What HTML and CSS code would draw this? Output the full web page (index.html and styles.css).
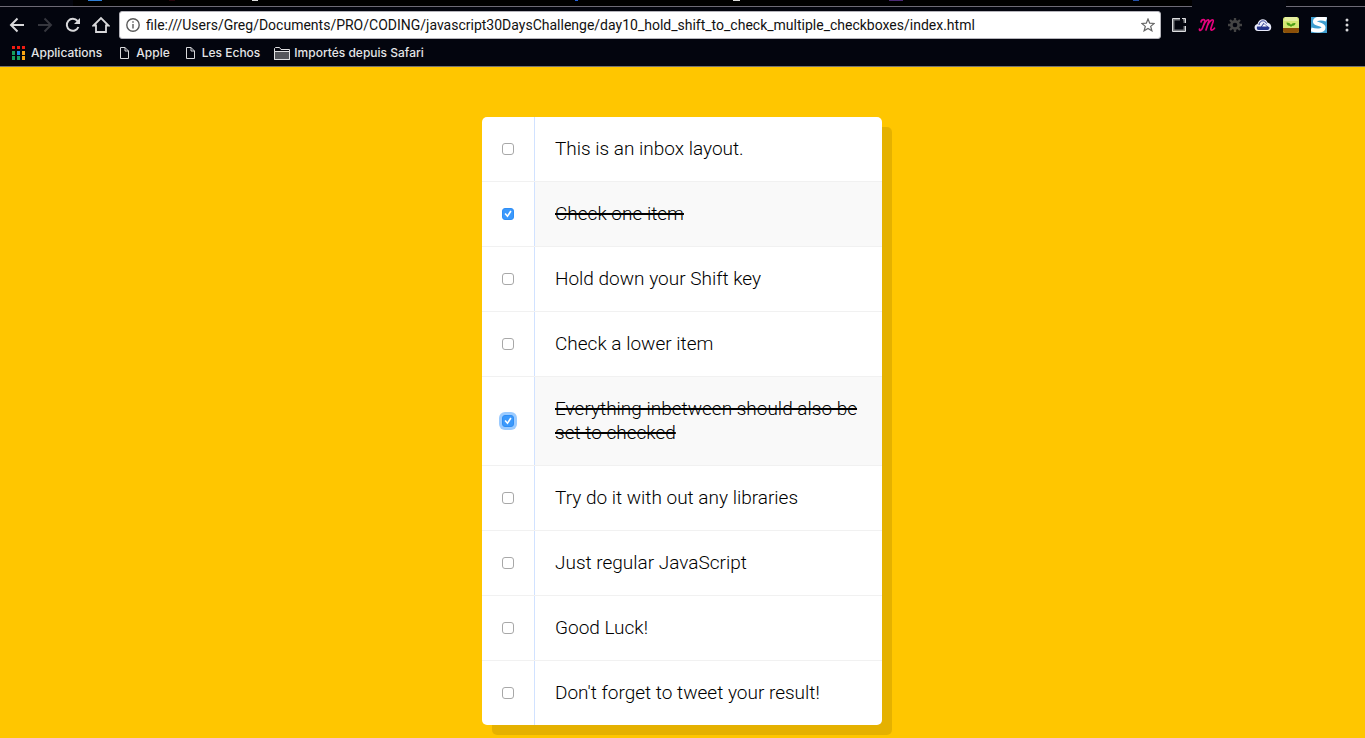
FILE: index.html
```html
<!DOCTYPE html>
<html lang="en">
<head>
<meta charset="utf-8">
<title>Hold Shift to Check Multiple Checkboxes</title>
<link rel="stylesheet" href="styles.css">
</head>
<body>
<header class="browser">
  <div class="tabs" aria-hidden="true">
    <svg class="tabs-left" width="1192" height="7" viewBox="0 0 1192 7">
      <path fill="#000" d="M73 0h1119v6H73z"/>
      <path fill="#2f7fd6" d="M88 0h14v1H88z"/>
      <path fill="#28040c" d="M169 0h6v1h-6z"/>
      <path fill="#ddd" d="M252 0h6v1h-6zM733 0h7v1h-7z"/>
      <path fill="#2563e0" d="M575 0h3v1h-3z"/>
      <path fill="#4b2a75" d="M889 0h14v1h-14z"/>
      <path fill="#2550a8" d="M1133 0h6v1h-6z"/>
      <path fill="#6d6a75" d="M0 6h1192v1H0z"/>
    </svg>
    <div class="tab-rest"></div>
  </div>
  <div class="toolbar">
    <nav class="nav" aria-label="Navigation">
      <button class="icon" aria-label="Back"><svg width="16" height="16" viewBox="0 0 16 16" fill="none" stroke="#d8d8da" stroke-width="2"><path d="M15 8H2.5M8.5 1.500 2 8l6.500 6.500"/></svg></button>
      <button class="icon" aria-label="Forward"><svg width="16" height="16" viewBox="0 0 16 16" fill="none" stroke="#36373e" stroke-width="2"><path d="M1 8h12.500M7.500 1.500 14 8l-6.500 6.500"/></svg></button>
      <button class="icon" aria-label="Reload"><svg width="16" height="16" viewBox="0 0 16 16" fill="none" stroke="#d8d8da" stroke-width="2"><path d="M13.400 10A6 6 0 1 1 12.500 4"/><path d="M15 1v6H9z" fill="#d8d8da" stroke="none"/></svg></button>
      <button class="icon" aria-label="Home"><svg width="18" height="18" viewBox="0 0 18 18" fill="none" stroke="#d8d8da" stroke-width="1.800"><path d="M1.500 9.500 9 2l7.500 7.500H14V16H4V9.500z"/></svg></button>
    </nav>
    <label class="address">
      <svg width="14" height="14" viewBox="0 0 14 14" fill="none" stroke="#5a5a5a" stroke-width="1.400"><circle cx="7" cy="7" r="6.200"/><path d="M7 6v4.500M7 3.300v1.500"/></svg>
      <input class="url" type="text" aria-label="Address" value="file:///Users/Greg/Documents/PRO/CODING/javascript30DaysChallenge/day10_hold_shift_to_check_multiple_checkboxes/index.html">
      <svg width="14" height="14" viewBox="0 0 14 14" fill="none" stroke="#666" stroke-width="1.200"><path d="m7 1 1.700 4.200 4.500.3-3.500 2.900 1.200 4.400L7 10.400l-3.900 2.400 1.200-4.400L.8 5.500l4.500-.3z"/></svg>
    </label>
    <div class="extensions">
      <button class="icon" aria-label="Window Resizer"><svg width="16" height="16" viewBox="0 0 16 16" fill="none"><path stroke="#77797d" stroke-width="2" d="M9 2.500H2.500V13.500h11V9M12 2.500h1.500V6"/><path stroke="#dcdde0" d="M9 1.500H1.500v13h13V9M11 1.500h3.500V6"/></svg></button>
      <button class="icon" aria-label="Momentum"><svg width="18" height="16" viewBox="0 0 18 16" fill="none" stroke="#e6037d" stroke-width="1.700" stroke-linecap="round" stroke-linejoin="round"><path d="M3 5C3.500 2 7.500 1.500 6.700 5L4.500 11c-1 3-3.500 3-3 1M5.500 8.500C7.500 3 11.500 1 10.700 4.500L8 13M9.200 9C11.500 3 16 1 15.200 4.500L13 11c-.8 3 1.700 2.500 3.500.2"/></svg></button>
      <button class="icon" aria-label="Settings extension"><svg width="16" height="16" viewBox="0 0 16 16" fill="none" stroke="#444"><circle cx="8" cy="8" r="3.700" stroke-width="2.700"/><path stroke-width="2.300" d="M8 1v2.500M8 12.500V15M1 8h2.500M12.500 8H15M3 3l2 2M11 11l2 2M13 3l-2 2M5 11l-2 2"/></svg></button>
      <button class="icon" aria-label="Cloud extension"><svg width="18" height="16" viewBox="0 0 18 16"><path fill="#e8eafa" d="M4 14C-.5 14-.5 7.500 3.500 7 4.500 1.500 11.500.5 13.500 5.500c5 1 5 8.500 0 8.500z"/><path fill="#26358d" d="M3 9.500h4L9.500 6l3 2.500 3 2c0 1.500-1 2.500-2 2.500h-9c-1.500 0-2-1.500-1.500-3.500z"/><path fill="none" stroke="#26358d" d="M5 8c.5-5 6-5.500 7.500-1.500"/><path fill="#fff" d="M8 9.500 10 7l3 2.500z"/></svg></button>
      <button class="icon" aria-label="Plant extension"><svg width="16" height="16" viewBox="0 0 16 16"><rect width="16" height="16" rx="2.500" fill="#d5e873"/><path fill="#e6efa0" d="M2 0h12l1 4H1z"/><path fill="#8c5008" d="M0 11h16v2.500Q16 16 13.500 16h-11Q0 16 0 13.500z"/><path fill="#4b9e15" d="M7.500 9C5 9 3.500 8 3.500 5.500 6 5.500 7.500 6.500 8 8c.5-1.500 2-2.300 4.500-2 0 2-1.500 3-4 3v1h-1z"/></svg></button>
      <button class="icon" aria-label="Stylish"><svg width="16" height="16" viewBox="0 0 16 16"><path fill="#3f9fd0" d="M0 0h16v16H0z"/><path fill="none" stroke="#fff" stroke-width="4" d="M15.500 2.500C10 .5 3.500 1.500 4 5c.4 2.500 8.500 2 8.500 5.500 0 3.500-7 3.800-12.500 2"/></svg></button>
      <button class="icon" aria-label="Menu"><svg width="4" height="14" viewBox="0 0 4 14" fill="#d8d8da"><circle cx="2" cy="2" r="1.500"/><circle cx="2" cy="7" r="1.500"/><circle cx="2" cy="12" r="1.500"/></svg></button>
    </div>
  </div>
  <nav class="bookmarks" aria-label="Bookmarks">
    <a class="bookmark apps" href="#"><svg width="14" height="14" viewBox="0 0 14 14"><path fill="#f01c12" d="M0 0h3v3H0zM5 0h3v3H5zM10 0h3v3h-3z"/><path fill="#16a05d" d="M0 5h3v4H0zM0 10h3v4H0zM5 10h3v4H5z"/><path fill="#188ce8" d="M5 5h3v4H5z"/><path fill="#f9a414" d="M10 5h3v4h-3zM10 10h3v4h-3z"/></svg>Applications</a>
    <a class="bookmark page" href="#"><svg width="9" height="12" viewBox="0 0 9 12" fill="none" stroke="#d8d8da"><path d="M.5.500h4.500l3.500 3.500v7.500h-8zM5 .5V4h3.500"/></svg>Apple</a>
    <a class="bookmark page" href="#"><svg width="9" height="12" viewBox="0 0 9 12" fill="none" stroke="#d8d8da"><path d="M.5.500h4.500l3.500 3.500v7.500h-8zM5 .5V4h3.500"/></svg>Les Echos</a>
    <a class="bookmark folder" href="#"><svg width="16" height="13" viewBox="0 0 16 13"><path fill="#05060e" stroke="#e0e0e2" d="M.5 12.500V1.500l1-1h4l1.500 2h8.500v10z"/><path fill="#55565c" stroke="#e0e0e2" d="M.5 4.500h15v8H.5z"/></svg>Importés depuis Safari</a>
  </nav>
</header>
<main class="page">
  <div class="inbox">
    <div class="item"><input type="checkbox" id="c1"><label for="c1">This is an inbox layout.</label></div>
    <div class="item"><input type="checkbox" id="c2" checked><label for="c2">Check one item</label></div>
    <div class="item"><input type="checkbox" id="c3"><label for="c3">Hold down your Shift key</label></div>
    <div class="item"><input type="checkbox" id="c4"><label for="c4">Check a lower item</label></div>
    <div class="item"><input type="checkbox" class="focused" id="c5" checked><label for="c5">Everything inbetween should also be set to checked</label></div>
    <div class="item"><input type="checkbox" id="c6"><label for="c6">Try do it with out any libraries</label></div>
    <div class="item"><input type="checkbox" id="c7"><label for="c7">Just regular JavaScript</label></div>
    <div class="item"><input type="checkbox" id="c8"><label for="c8">Good Luck!</label></div>
    <div class="item"><input type="checkbox" id="c9"><label for="c9">Don't forget to tweet your result!</label></div>
  </div>
</main>
</body>
</html>
```
FILE: styles.css
```css
* { box-sizing: border-box; }
body {
  margin: 0;
  min-height: 100vh;
  display: flex;
  flex-direction: column;
  background: #ffc600;
  font-family: Roboto, "Liberation Sans", sans-serif;
}
svg { display: block; flex: none; }
.browser {
  background: #03050e;
  border-bottom: 1px solid #77746f;
}
.tabs { display: flex; height: 7px; overflow: hidden; }
.tabs-left { margin-right: 94px; }
.tab-rest { flex: 1; background: #020309; border-bottom: 1px solid #6d6a75; }
.toolbar {
  display: flex;
  align-items: center;
  height: 36px;
  padding: 0 16px 0 8px;
}
.nav { display: flex; gap: 10px; margin-right: 9px; }
.icon {
  display: flex;
  align-items: center;
  justify-content: center;
  width: 18px;
  height: 18px;
  padding: 0;
  border: 0;
  background: none;
}
.address {
  flex: 1;
  min-width: 0;
  display: flex;
  align-items: center;
  gap: 6px;
  height: 28px;
  padding: 0 5px 0 6px;
  background: #fff;
  border: 1px solid #b5b4bb;
  border-radius: 3px;
}
.url {
  flex: 1;
  min-width: 0;
  padding: 0;
  border: 0;
  outline: 0;
  background: none;
  color: #111;
  font: 14px/20px Roboto, "Liberation Sans", sans-serif;
}
.extensions { display: flex; gap: 10px; margin-left: 9px; }
.extensions .icon:last-child { margin-right: -7px; }
.bookmarks {
  display: flex;
  align-items: center;
  height: 23px;
  padding: 0 12px 3px;
}
.bookmark {
  display: flex;
  align-items: center;
  color: #e4e4e6;
  font-family: Inter, "Liberation Sans", sans-serif;
  font-size: 12px;
  font-weight: 500;
  line-height: 16px;
  text-decoration: none;
  white-space: nowrap;
}
.apps { gap: 5px; margin-right: 18px; }
.page.bookmark { gap: 7px; margin-right: 16px; }
.bookmark.folder { gap: 4px; margin-left: -2px; }
main.page { padding: 50px 21px 13px 20px; }
.inbox {
  max-width: 400px;
  margin: 0 auto;
  overflow: hidden;
  background: #fff;
  border-radius: 5px;
  box-shadow: 10px 10px 0 rgba(0, 0, 0, 0.1);
}
.item {
  display: flex;
  align-items: center;
  border-bottom: 1px solid #f1f1f1;
}
.item:last-child { border-bottom: 0; }
.item label {
  flex: 1;
  padding: 20px;
  border-left: 1px solid #d1e2ff;
  color: #000;
  font-family: Roboto, "Liberation Sans", sans-serif;
  font-size: 19px;
  font-weight: 300;
  line-height: 24px;
}
.item input {
  appearance: none;
  display: grid;
  place-items: center;
  width: 12px;
  height: 12px;
  margin: 20px;
  background: #fff;
  border: 1px solid #a8a8a8;
  border-radius: 3px;
}
.item input:checked { background: #3b99fc; border-color: #2f8ef5; }
.item input:checked::after {
  content: "";
  width: 8px;
  height: 8px;
  background: #fff;
  clip-path: polygon(6% 50%, 22% 38%, 42% 62%, 78% 6%, 95% 18%, 45% 94%);
}
.item input.focused { box-shadow: 0 0 0 3px #9bcbff; }
.item input:checked + label {
  background: #f9f9f9;
  text-decoration: line-through;
  text-decoration-thickness: 2px;
}
```
